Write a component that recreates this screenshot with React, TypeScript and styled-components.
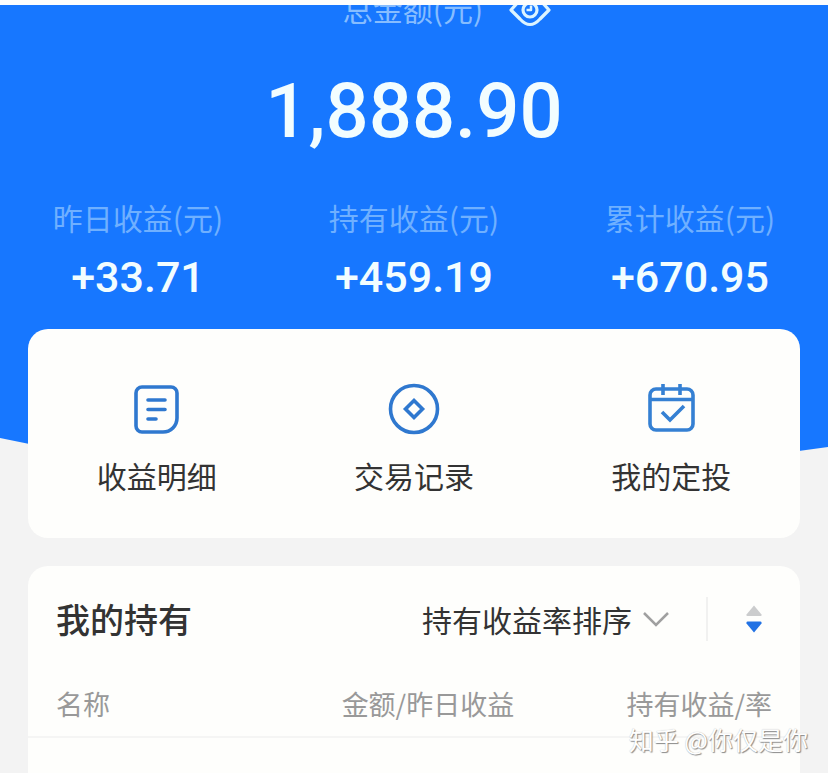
import React from "react";
import styled, { createGlobalStyle } from "styled-components";

const GlobalStyle = createGlobalStyle`
  *, *::before, *::after { box-sizing: border-box; }
  body {
    margin: 0;
    background: #f3f3f3;
    color: #333;
    font-family: "Noto Sans CJK SC", sans-serif;
  }
  button, select { font: inherit; color: inherit; }
`;

const Page = styled.div`
  position: relative;
  display: flex;
  flex-direction: column;
  min-height: 100vh;
  border-top: 5px solid #fdfdfd;
`;

const Hero = styled.header`
  display: flex;
  flex-direction: column;
  padding-bottom: 149px;
  overflow: hidden;
  color: #f2fdff;
  background: #1777ff;
  clip-path: polygon(0 0, 100% 0, 100% 98%, 92% 100%, 8% 99%, 0 96%);
`;

const TotalLabel = styled.div`
  display: flex;
  align-items: center;
  justify-content: center;
  gap: 26px;
  height: 34px;
  margin-top: -14px;
  padding-left: 66px;
  font-size: 30px;
  line-height: 34px;
  color: #86bdff;
`;

const IconButton = styled.button`
  display: flex;
  align-items: center;
  justify-content: center;
  padding: 0;
  border: 0;
  background: none;
  cursor: pointer;
`;

const Total = styled.div`
  margin-top: 36px;
  font-family: Roboto, sans-serif;
  font-size: 76px;
  font-weight: 500;
  line-height: 100px;
  text-align: center;
`;

const Stats = styled.dl`
  display: grid;
  grid-template-columns: repeat(3, 1fr);
  margin: 34px 0 0;
  text-align: center;
`;

const StatLabel = styled.dt`
  font-size: 30px;
  line-height: 44px;
  color: #6fb0ff;
`;

const StatValue = styled.dd`
  margin: 8px 0 0;
  font-family: Roboto, sans-serif;
  font-size: 43px;
  font-weight: 500;
  line-height: 60px;
`;

const Card = styled.section`
  margin: 0 28px;
  border-radius: 20px;
  background: #fefefc;
`;

const ActionCard = styled(Card)`
  position: relative;
  display: grid;
  grid-template-columns: repeat(3, 1fr);
  margin-top: -127px;
`;

const Action = styled.button`
  display: flex;
  flex-direction: column;
  align-items: center;
  gap: 19px;
  padding: 52px 0 41px;
  border: 0;
  background: none;
  font-size: 30px;
  line-height: 43px;
  cursor: pointer;
`;

const HoldingsCard = styled(Card)`
  flex: 1;
  margin-top: 28px;
  border-radius: 20px 20px 0 0;
`;

const HoldingsBar = styled.div`
  display: flex;
  align-items: center;
  padding: 30px 36px 0 28px;
`;

const Title = styled.h2`
  flex: 1;
  margin: 0;
  font-size: 34px;
  font-weight: 500;
  line-height: 46px;
`;

const SortField = styled.label`
  display: flex;
  align-items: center;
  gap: 10px;
`;

const SortSelect = styled.select`
  appearance: none;
  padding: 0;
  border: 0;
  background: none;
  font-size: 30px;
  line-height: 42px;
  cursor: pointer;
`;

const Divider = styled.span`
  width: 2px;
  height: 44px;
  margin: 0 36px;
  background: #f1f1f0;
`;

const HoldingsTable = styled.table`
  width: 100%;
  margin-top: 40px;
  border-collapse: collapse;
  table-layout: fixed;
`;

const HeadCell = styled.th<{ $width: string; $align?: string }>`
  width: ${(p) => p.$width};
  padding: 0 28px 10px;
  border-bottom: 2px solid #f5f5f4;
  font-size: 27px;
  font-weight: 400;
  line-height: 44px;
  text-align: ${(p) => p.$align ?? "left"};
  white-space: nowrap;
  color: #999;
`;

const Watermark = styled.div`
  position: absolute;
  right: 20px;
  bottom: 16px;
  font-size: 25px;
  line-height: 36px;
  color: #fefefe;
  text-shadow: 1px 1px 1px #8a8a8a, 0 0 1px #bbb;
`;

const EyeIcon = () => (
  <svg width="42" height="38" viewBox="0 0 42 38" fill="none" stroke="#dcf4ff" strokeWidth="3.2" strokeLinejoin="round">
    <path d="M2 21 L11 11 Q21 1 31 11 L40 21 L31 30 Q21 41 11 30 Z" />
    <circle cx="21" cy="21" r="7" />
    <path d="M22 16.5v4.5h-4.5" strokeWidth="2.5" />
  </svg>
);

const DetailIcon = () => (
  <svg width="52" height="54" viewBox="0 0 52 54" fill="none" stroke="#2f78cf" strokeWidth="3.6" strokeLinecap="round">
    <path d="M11 6h29a6 6 0 0 1 6 6v25a14 14 0 0 1-14 14H11a6 6 0 0 1-6-6V12a6 6 0 0 1 6-6Z" />
    <path d="M17 19h17M17 28.5h17M17 38h8" />
  </svg>
);

const RecordIcon = () => (
  <svg width="54" height="54" viewBox="0 0 54 54" fill="none" stroke="#2f78cf" strokeWidth="3.6">
    <circle cx="27" cy="28" r="23.5" />
    <path d="M27 19.5l8.5 8.5-8.5 8.5-8.5-8.5Z" />
  </svg>
);

const PlanIcon = () => (
  <svg width="52" height="54" viewBox="0 0 52 54" fill="none" stroke="#3580d3" strokeWidth="3.6">
    <rect x="5" y="8" width="43" height="41" rx="6" />
    <path d="M5 18.5h43M18 3v11M35 3v11M17 31l8 8 14-14" />
  </svg>
);

const ChevronIcon = () => (
  <svg width="28" height="20" viewBox="0 0 28 20" fill="none" stroke="#a0a0a0" strokeWidth="2.5">
    <path d="M2 4l12 12L26 4" />
  </svg>
);

const OrderIcon = () => (
  <svg width="20" height="30" viewBox="0 0 20 30">
    <path d="M10 1.5L17.5 10.5Q18 12 16.5 12h-13Q2 12 2.5 10.5Z" fill="#cbcccd" />
    <path d="M10 28.5L2.5 19.5Q2 17.5 3.5 17.5h13Q18 17.5 17.5 19.5Z" fill="#2272e4" />
  </svg>
);

const stats = [
  { label: "昨日收益(元)", value: "+33.71" },
  { label: "持有收益(元)", value: "+459.19" },
  { label: "累计收益(元)", value: "+670.95" },
];

const actions = [
  { label: "收益明细", Icon: DetailIcon },
  { label: "交易记录", Icon: RecordIcon },
  { label: "我的定投", Icon: PlanIcon },
];

export default function App() {
  return (
    <>
      <GlobalStyle />
      <Page>
        <Hero>
          <TotalLabel>
            总金额(元)
            <IconButton type="button" aria-label="隐藏金额">
              <EyeIcon />
            </IconButton>
          </TotalLabel>
          <Total>1,888.90</Total>
          <Stats>
            {stats.map((s) => (
              <div key={s.label}>
                <StatLabel>{s.label}</StatLabel>
                <StatValue>{s.value}</StatValue>
              </div>
            ))}
          </Stats>
        </Hero>
        <ActionCard>
          {actions.map(({ label, Icon }) => (
            <Action key={label} type="button">
              <Icon />
              {label}
            </Action>
          ))}
        </ActionCard>
        <HoldingsCard>
          <HoldingsBar>
            <Title>我的持有</Title>
            <SortField>
              <SortSelect aria-label="排序方式">
                <option>持有收益率排序</option>
              </SortSelect>
              <ChevronIcon />
            </SortField>
            <Divider />
            <IconButton type="button" aria-label="切换升降序">
              <OrderIcon />
            </IconButton>
          </HoldingsBar>
          <HoldingsTable>
            <thead>
              <tr>
                <HeadCell $width="37%">名称</HeadCell>
                <HeadCell $width="32%">金额/昨日收益</HeadCell>
                <HeadCell $width="31%" $align="right">持有收益/率</HeadCell>
              </tr>
            </thead>
          </HoldingsTable>
        </HoldingsCard>
        <Watermark>知乎 @你仅是你</Watermark>
      </Page>
    </>
  );
}
